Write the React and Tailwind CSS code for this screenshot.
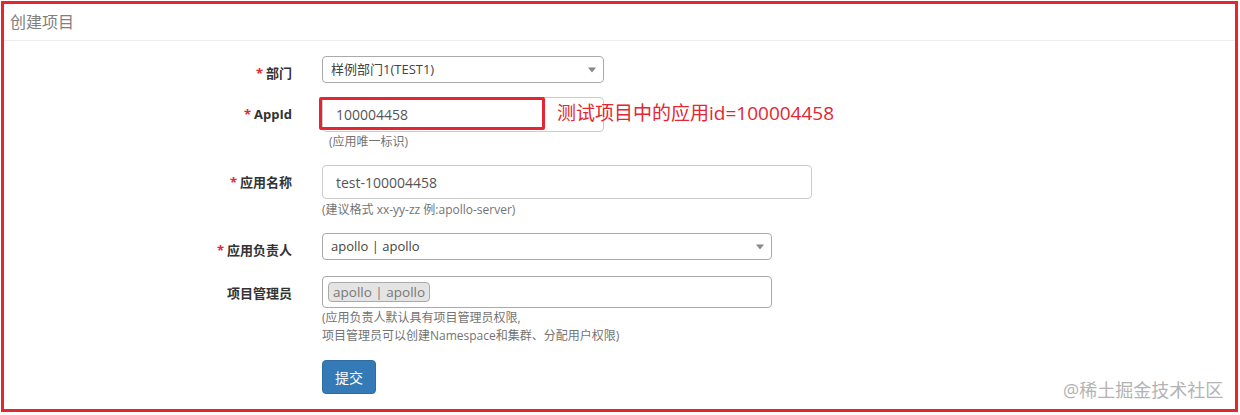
import React from "react";

const font = { fontFamily: '"Open Sans", "Noto Sans CJK SC", sans-serif' };

function Caret() {
  return (
    <span className="absolute right-[7px] top-1/2 -translate-y-1/2 w-0 h-0 border-l-[4px] border-r-[4px] border-t-[5px] border-l-transparent border-r-transparent border-t-[#888]" />
  );
}

function Label({ required, children }) {
  return (
    <div className="w-[288px] shrink-0 text-right pt-[7px] text-[13px] leading-[20px] font-bold text-[#333]">
      {required && <span className="text-[#e3262f] mr-[3px]">*</span>}
      {children}
    </div>
  );
}

export default function App() {
  return (
    <div className="w-[1240px] h-[415px] bg-white relative" style={font}>
      <div className="absolute left-[1px] top-[1px] w-[1237px] h-[411px] border-[3px] border-[#e3262f] flex flex-col">
        <div className="h-[37px] border-b border-[#eee] pl-[6px] flex items-center text-[16px] text-[#808080] pb-[1px]">
          创建项目
        </div>
        <div className="flex flex-col pt-[15px]">
          {/* 部门 */}
          <div className="flex gap-[30px]">
            <Label required>部门</Label>
            <div className="relative w-[282px] h-[27px] border border-[#aaa] rounded-[4px] flex items-center pl-[8px] text-[13px] text-[#444]">
              样例部门1(TEST1)
              <Caret />
            </div>
          </div>
          {/* AppId */}
          <div className="flex gap-[30px] mt-[14px]">
            <Label required>AppId</Label>
            <div className="flex flex-col">
              <div className="w-[282px] h-[35px] border border-[#ccc] rounded-[4px] flex items-center pl-[13px] text-[14px] text-[#555]">
                100004458
              </div>
              <div className="ml-[7px] mt-[2px] text-[12px] leading-[16px] text-[#737373]">(应用唯一标识)</div>
            </div>
          </div>
          {/* 应用名称 */}
          <div className="flex gap-[30px] mt-[15px]">
            <Label required>应用名称</Label>
            <div className="flex flex-col">
              <div className="w-[490px] h-[34px] border border-[#ccc] rounded-[4px] flex items-center pl-[13px] text-[14px] text-[#555]">
                test-100004458
              </div>
              <div className="mt-[3px] text-[12px] leading-[16px] text-[#737373]">(建议格式 xx-yy-zz 例:apollo-server)</div>
            </div>
          </div>
          {/* 应用负责人 */}
          <div className="flex gap-[30px] mt-[15px]">
            <Label required>应用负责人</Label>
            <div className="relative w-[450px] h-[27px] border border-[#aaa] rounded-[4px] flex items-center pl-[8px] text-[13px] text-[#444]">
              apollo | apollo
              <Caret />
            </div>
          </div>
          {/* 项目管理员 */}
          <div className="flex gap-[30px] mt-[16px]">
            <Label>项目管理员</Label>
            <div className="flex flex-col">
              <div className="w-[450px] h-[32px] border border-[#aaa] rounded-[4px] flex items-center pl-[5px]">
                <span className="h-[20px] px-[4px] flex items-center bg-[#e4e4e4] border border-[#aaa] rounded-[4px] text-[13.5px] text-[#777]">
                  apollo | apollo
                </span>
              </div>
              <div className="mt-[1px] text-[12px] leading-[18px] text-[#737373]">
                (应用负责人默认具有项目管理员权限,
                <br />
                项目管理员可以创建Namespace和集群、分配用户权限)
              </div>
            </div>
          </div>
          {/* submit */}
          <div className="flex gap-[30px] mt-[15px]">
            <div className="w-[288px] shrink-0" />
            <button className="w-[54px] h-[34px] bg-[#337ab7] border border-[#2e6da4] rounded-[4px] text-white text-[14px]">
              提交
            </button>
          </div>
        </div>
      </div>

      {/* annotation box */}
      <div className="absolute left-[319px] top-[97px] w-[226px] h-[33px] border-[3px] border-[#e3262f] rounded-[2px]" />
      <div className="absolute left-[557px] top-[100px] text-[19px] leading-[26px] text-[#e3262f]">
        测试项目中的应用id=100004458
      </div>

      {/* watermark */}
      <div className="absolute left-[1063px] top-[378px] text-[18px] leading-[24px] text-[#b3b3b3]">
        @稀土掘金技术社区
      </div>
    </div>
  );
}
